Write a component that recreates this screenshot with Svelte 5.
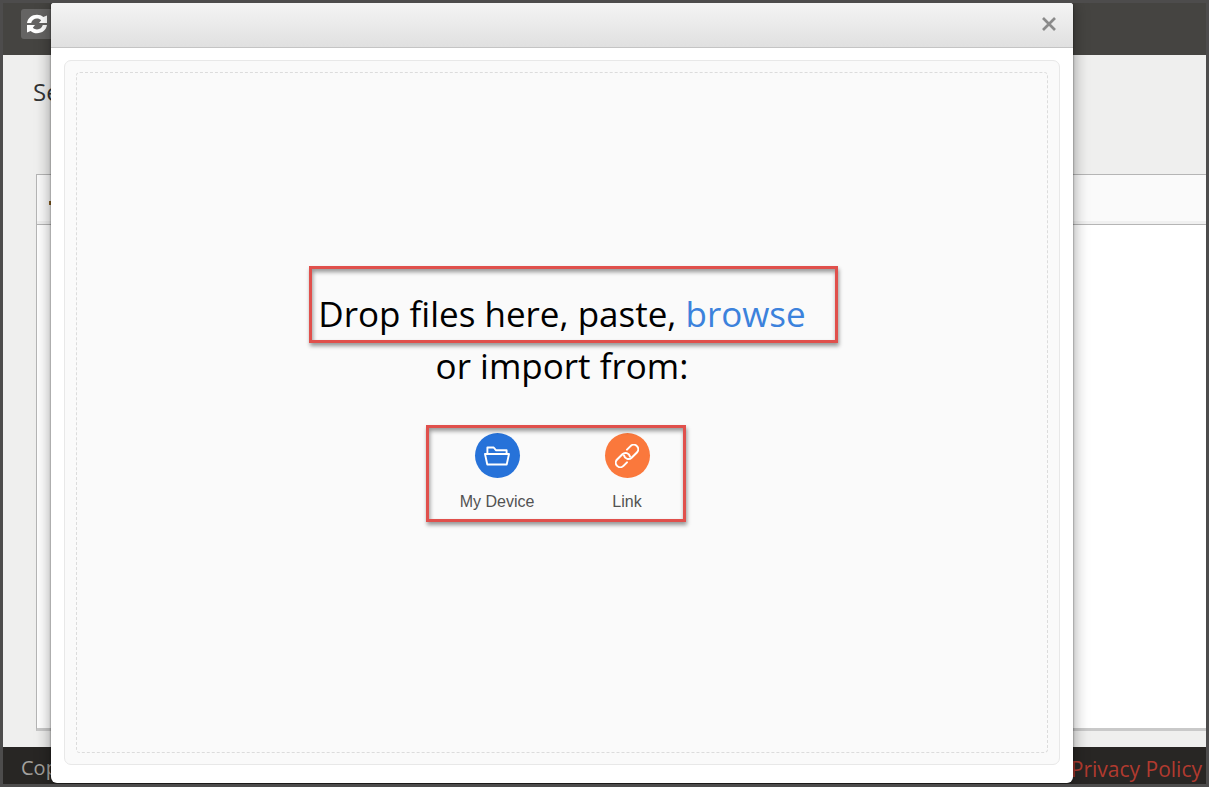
<script>
    let open = $state(true);

    function closeDialog() {
        open = false;
    }
</script>

<div class="page">
    <header class="topbar">
        <button class="refresh" aria-label="Refresh">
            <svg width="20" height="20" viewBox="0 0 20 20" fill="#fff">
                <path d="M0 9C.8 4 4.700.8 10 .8c2.500 0 4.600.8 6.300 2.300L20 1.500V9h-8l2.200-2.800C13 5.100 11.600 4.600 10 4.600 7 4.600 5 6.300 4.200 9z" />
                <path d="M20 11c-.8 5-4.700 8.200-10 8.200-2.500 0-4.600-.8-6.300-2.300L0 18.500V11h8l-2.200 2.800c1.200 1.100 2.600 1.600 4.200 1.600 3 0 5-1.700 5.800-4.400z" />
            </svg>
        </button>
    </header>

    <main class="main">
        <h1 class="title">Se</h1>
        <section class="panel">
            <div class="toolbar">
                <span class="marker"></span>
            </div>
            <div class="panelBody"></div>
        </section>
    </main>

    <footer class="footer">
        <span class="copyright">Copyright</span>
        <a class="privacy" href="#privacy">Privacy Policy</a>
    </footer>

    {#if open}
        <div class="dialog" role="dialog" aria-label="Upload files">
            <div class="dialogHeader">
                <button class="close" aria-label="Close" onclick={closeDialog}>
                    <svg width="14" height="14" viewBox="0 0 14 14" stroke="#8a8a8a" stroke-width="2.700">
                        <path d="M1 1l12 12M13 1l-12 12" />
                    </svg>
                </button>
            </div>
            <div class="dialogBody">
                <div class="uploader">
                    <div class="dropzone">
                        <div class="prompt">
                            <div class="highlight line">
                                Drop files here, paste, <button class="browse">browse</button>
                            </div>
                            <div>or import from:</div>
                        </div>
                        <div class="sources highlight">
                            <button class="source">
                                <span class="circle device">
                                    <svg width="26" height="20" viewBox="0 0 26 20" fill="none" stroke="#fff" stroke-width="1.900" stroke-linejoin="round">
                                        <path d="M3.400 8V1.500h6.300l2.200 2.700h10.700V8" />
                                        <path d="M1 8h24l-2.300 10.500H3.300z" />
                                    </svg>
                                </span>
                                <span>My Device</span>
                            </button>
                            <button class="source">
                                <span class="circle link">
                                    <svg width="24" height="24" viewBox="0 0 24 24" fill="none" stroke="#fff" stroke-width="2" stroke-linecap="round">
                                        <g transform="rotate(-45 12 12)">
                                            <path d="M7.500 16.500H2.500a4.500 4.500 0 0 1 0-9h7.500a4.500 4.500 0 0 1 3.800 6.900" />
                                            <path d="M16.500 7.500h5a4.500 4.500 0 0 1 0 9h-7.500a4.500 4.500 0 0 1-3.800-6.900" />
                                        </g>
                                    </svg>
                                </span>
                                <span>Link</span>
                            </button>
                        </div>
                    </div>
                </div>
            </div>
        </div>
    {/if}
</div>

<style>
    :global(body) {
        background: #4d4c4c;
    }
    button {
        border: 0;
        padding: 0;
        background: none;
        font: inherit;
        cursor: pointer;
    }
    svg {
        display: block;
    }
    .page {
        position: relative;
        display: flex;
        flex-direction: column;
        box-sizing: border-box;
        min-height: 100vh;
        border: 3px solid #4d4c4c;
        background: #efefee;
        font-family: "Open Sans", sans-serif;
        overflow: hidden;
    }
    .topbar {
        height: 52px;
        padding: 6px 18px;
        box-sizing: border-box;
        background: #454441;
    }
    .refresh {
        display: flex;
        align-items: center;
        width: 44px;
        height: 30px;
        padding-left: 6px;
        border-radius: 3px;
        background: #656463;
    }
    .main {
        flex: 1;
        display: flex;
        flex-direction: column;
        padding: 20px 0 16px 33px;
    }
    .title {
        margin: 0 0 65px -3px;
        font-size: 24px;
        line-height: 34px;
        font-weight: 400;
        color: #333;
    }
    .panel {
        flex: 1;
        display: flex;
        flex-direction: column;
        border: 1px solid #b5b5b5;
        border-right: 0;
        border-bottom: 3px solid #c9c9c9;
        background: #fff;
    }
    .toolbar {
        display: flex;
        align-items: center;
        height: 50px;
        box-sizing: border-box;
        border-bottom: 1px solid #b5b5b5;
        background: #fafafa;
        box-shadow: inset 0 -3px #f0f0f0;
    }
    .marker {
        width: 2px;
        height: 4px;
        margin: 6px 0 0 12px;
        background: #8a6020;
    }
    .panelBody {
        flex: 1;
    }
    .footer {
        display: flex;
        justify-content: space-between;
        align-items: center;
        height: 37px;
        padding: 0 4px 0 18px;
        background: #282624;
        line-height: 30px;
    }
    .copyright {
        padding-top: 4px;
        font-size: 20px;
        color: #a3a19e;
    }
    .privacy {
        padding-top: 6px;
        font-size: 21px;
        color: #b13a2f;
        text-decoration: none;
    }
    .dialog {
        position: absolute;
        top: 0;
        right: 133px;
        bottom: 1px;
        left: 48px;
        display: flex;
        flex-direction: column;
        border-radius: 3px 3px 6px 6px;
        background: #fff;
        box-shadow: 0 0 2px rgba(0, 0, 0, 0.6), 0 0 16px rgba(0, 0, 0, 0.4);
    }
    .dialogHeader {
        display: flex;
        justify-content: flex-end;
        align-items: center;
        height: 45px;
        padding: 0 17px 3px 0;
        box-sizing: border-box;
        border-bottom: 1px solid #c4c4c4;
        border-radius: 3px 3px 0 0;
        background: linear-gradient(#f4f4f4, #e0e0e0);
    }
    .dialogBody {
        flex: 1;
        display: flex;
        padding: 12px 13px 18px 13px;
    }
    .uploader {
        flex: 1;
        display: flex;
        padding: 11px;
        border: 1px solid #e8e8e8;
        border-radius: 7px;
        background: #fafafa;
    }
    .dropzone {
        flex: 1;
        display: flex;
        flex-direction: column;
        align-items: center;
        justify-content: center;
        padding-bottom: 25px;
        border: 1px dashed #dcdcdc;
        border-radius: 4px;
    }
    .prompt {
        display: flex;
        flex-direction: column;
        align-items: center;
        margin-bottom: 41px;
        font-size: 35px;
        line-height: 52px;
        color: #000;
    }
    .browse {
        color: #3c82dc;
    }
    .highlight {
        position: relative;
    }
    .highlight::after {
        content: "";
        position: absolute;
        inset: -8px 6px -10px -6px;
        border: 3px solid #e0504c;
        box-shadow: 1px 3px 4px rgba(0, 0, 0, 0.4), inset 1px 3px 4px rgba(0, 0, 0, 0.4);
        pointer-events: none;
    }
    .line::after {
        inset: -22px -32px -3px -9px;
    }
    .sources {
        display: flex;
    }
    .source {
        display: flex;
        flex-direction: column;
        align-items: center;
        gap: 14px;
        width: 130px;
        font-family: "Liberation Sans", sans-serif;
        font-size: 16px;
        line-height: 20px;
        color: #525252;
    }
    .circle {
        display: flex;
        align-items: center;
        justify-content: center;
        width: 45px;
        height: 45px;
        border-radius: 50%;
    }
    .device {
        background: #2672d9;
    }
    .link {
        background: #fa783c;
    }
</style>
